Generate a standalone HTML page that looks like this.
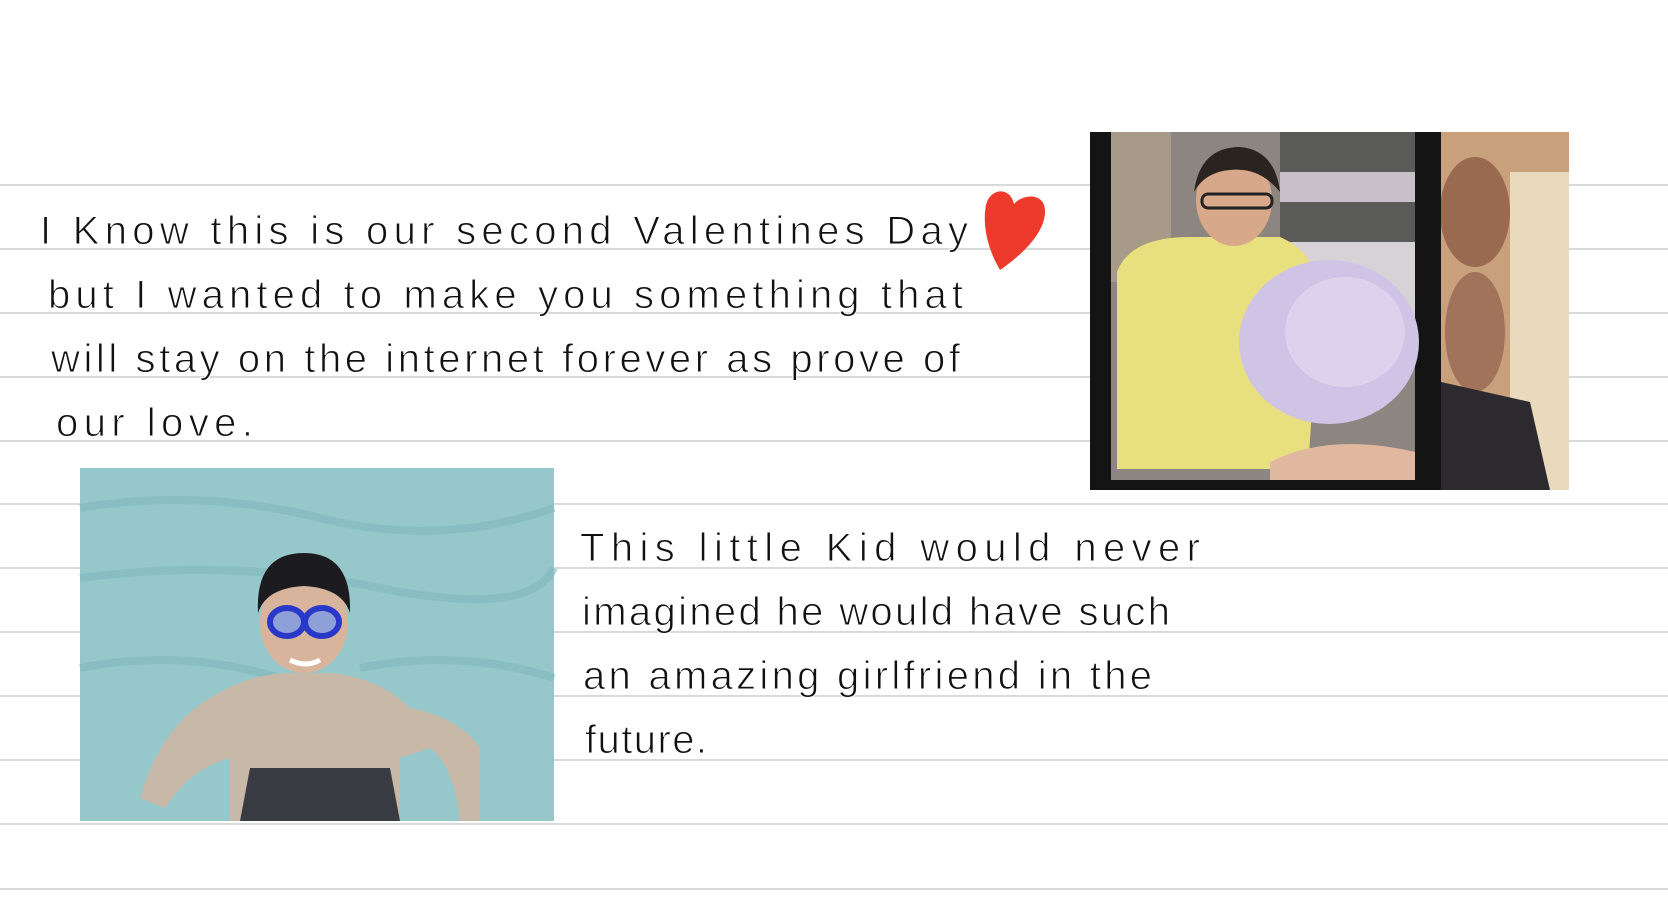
<!DOCTYPE html>
<html><head><meta charset="utf-8"><style>
html,body{margin:0;padding:0;background:#fff;}
body{width:1668px;height:916px;position:relative;overflow:hidden;}
.ln{position:absolute;left:0;width:1668px;height:2px;background:#d9d9d9;}
svg{position:absolute;left:0;top:0;}
</style></head><body>
<div class="ln" style="top:184px"></div>
<div class="ln" style="top:248px"></div>
<div class="ln" style="top:312px"></div>
<div class="ln" style="top:376px"></div>
<div class="ln" style="top:440px"></div>
<div class="ln" style="top:503px"></div>
<div class="ln" style="top:567px"></div>
<div class="ln" style="top:631px"></div>
<div class="ln" style="top:695px"></div>
<div class="ln" style="top:759px"></div>
<div class="ln" style="top:823px"></div>
<div class="ln" style="top:888px"></div>

<svg width="1668" height="916" viewBox="0 0 1668 916">
<g font-family="Liberation Sans, sans-serif" font-size="40" fill="#111" stroke="#fff" stroke-width="1">
<text x="40" y="244" textLength="928" lengthAdjust="spacing">I  Know this is our second Valentines Day</text>
<text x="48" y="308" textLength="915" lengthAdjust="spacing">but I wanted to make you something that</text>
<text x="51" y="372" textLength="909" lengthAdjust="spacing">will stay on the internet forever as prove of</text>
<text x="56" y="436" textLength="197" lengthAdjust="spacing">our love.</text>
<text x="580" y="561" textLength="620" lengthAdjust="spacing">This little Kid would never</text>
<text x="582" y="625" textLength="588" lengthAdjust="spacing">imagined he would have such</text>
<text x="583" y="689" textLength="569" lengthAdjust="spacing">an amazing girlfriend in the</text>
<text x="585" y="753" textLength="122" lengthAdjust="spacing">future.</text>
</g>
<path d="M1000 270 C988 250 982 225 986 205 C990 188 1010 186 1014 204 C1022 194 1044 192 1045 210 C1046 232 1022 255 1000 270 Z" fill="#ee3a2c"/>

<g transform="translate(1090,132)">
<rect width="479" height="358" fill="#b08a6a"/>
<rect x="351" y="0" width="128" height="358" fill="#c9a07c"/>
<rect x="420" y="40" width="59" height="318" fill="#e9d9bd"/>
<ellipse cx="385" cy="80" rx="35" ry="55" fill="#9a6a50"/>
<ellipse cx="385" cy="200" rx="30" ry="60" fill="#a0735a"/>
<path d="M351 250 L440 270 L460 358 L351 358Z" fill="#2c2a2e"/>
<rect x="0" y="0" width="351" height="358" fill="#141414"/>
<rect x="21" y="0" width="304" height="348" fill="#8c8580"/>
<rect x="190" y="0" width="135" height="110" fill="#5a5a58"/>
<rect x="190" y="40" width="135" height="30" fill="#c8c0c8"/>
<rect x="190" y="110" width="135" height="80" fill="#d6d2d6"/>
<rect x="21" y="0" width="60" height="150" fill="#a89a88"/>
<path d="M27 337 L27 140 Q40 105 100 105 L190 105 Q225 120 230 160 L218 337Z" fill="#e8e07e"/>
<ellipse cx="144" cy="68" rx="38" ry="46" fill="#d8a88a"/>
<path d="M104 60 Q110 15 150 15 Q185 18 190 60 Q170 35 140 38 Q115 40 104 60Z" fill="#2a2420"/>
<rect x="112" y="62" width="70" height="14" rx="6" fill="none" stroke="#222" stroke-width="3"/>
<ellipse cx="239" cy="210" rx="90" ry="82" fill="#cfc3e6"/>
<ellipse cx="255" cy="200" rx="60" ry="55" fill="#ddd2ee"/>
<path d="M180 330 Q240 300 325 320 L325 348 L180 348Z" fill="#e0b8a0"/>
</g>

<g transform="translate(80,468)">
<rect width="474" height="353" fill="#95c7cb"/>
<path d="M0 40 Q120 20 240 50 T474 40 M0 110 Q150 90 300 120 T474 100 M0 200 Q100 180 200 210 M280 200 Q380 180 474 210" stroke="#80b6bc" stroke-width="8" fill="none" opacity=".6"/>
<path d="M60 330 Q80 260 130 230 Q170 205 210 205 L250 205 Q300 210 330 240 Q380 250 400 280 L400 353 L380 353 Q375 300 350 280 L320 290 L320 353 L150 353 L150 290 Q110 300 85 340Z" fill="#c8b8a8"/>
<path d="M170 300 L310 300 L320 353 L160 353Z" fill="#3a3c44"/>
<ellipse cx="224" cy="155" rx="44" ry="50" fill="#d9b49c"/>
<path d="M178 145 Q175 85 224 85 Q272 85 270 145 Q262 120 224 118 Q186 120 178 145Z" fill="#1c1c20"/>
<ellipse cx="207" cy="154" rx="17" ry="14" fill="#8fa0d8" stroke="#2838c8" stroke-width="6"/>
<ellipse cx="242" cy="154" rx="17" ry="14" fill="#8fa0d8" stroke="#2838c8" stroke-width="6"/>
<path d="M210 192 Q226 200 240 192" stroke="#fff" stroke-width="5" fill="none"/>
</g>
</svg>
</body></html>
